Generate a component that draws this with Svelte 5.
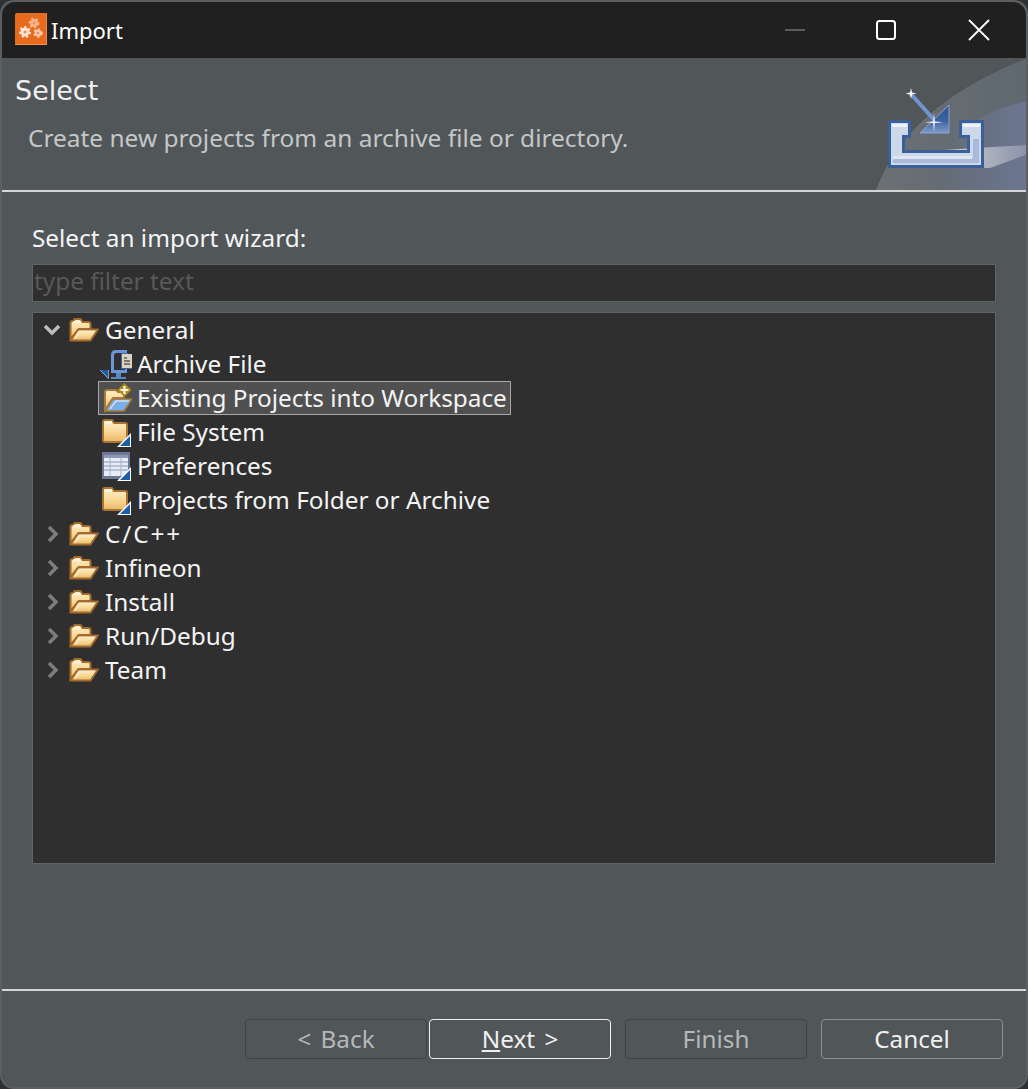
<script>
  const general = [
    { label: 'Archive File', icon: 'archive' },
    { label: 'Existing Projects into Workspace', icon: 'existing', selected: true },
    { label: 'File System', icon: 'folder' },
    { label: 'Preferences', icon: 'prefs' },
    { label: 'Projects from Folder or Archive', icon: 'folder' }
  ];
  const groups = ['C/C++', 'Infineon', 'Install', 'Run/Debug', 'Team'];
</script>

{#snippet openFolder()}
  <svg class="ic" width="30" height="24" viewBox="0 0 30 24">
    <path d="M1.500 21V5q0-2 2-2h1l1-2h6l2 3h6q2 0 2 2v5H10L1.500 21z" fill="url(#fold)" stroke="#a36a2c" stroke-width="2"/>
    <path d="M4 3h8v2.500H4z" fill="#fff3d6"/>
    <path d="M1.500 22.500l7.500-11h20l-7.500 11H1.500z" fill="url(#fold)" stroke="#a36a2c" stroke-width="2" stroke-linejoin="round"/>
    <path d="M6 20.500l5-7h14" fill="none" stroke="#fbeac6" stroke-width="1.500"/>
  </svg>
{/snippet}

{#snippet wedge()}
  <path d="M17 31L31 17V31z" fill="#fff"/>
  <path d="M20 30L30 20V30z" fill="#1c5ea8"/>
{/snippet}

{#snippet childIcon(kind)}
  {#if kind === 'archive'}
    <svg class="ic" width="32" height="32" viewBox="0 0 32 32">
      <path d="M0 22h8.500v9z" fill="#fff"/>
      <path d="M0.500 22h7.500v8z" fill="#1c5ea8"/>
      <path d="M11 25V7q0-5 5-5h11v23z" fill="#6c95d6"/>
      <path d="M14 22V8q0-3 3-3h8v17z" fill="#2f2f2f"/>
      <path d="M16 25h5v4h5v2H11v-2h5z" fill="#5b86c6"/>
      <path d="M21 5h7l5 5v11H21z" fill="#3d64a8"/>
      <rect x="22" y="6" width="10" height="14" fill="#d9d4c4"/>
      <path d="M24 10h3M24 13h6M24 16h6" stroke="#5c5c50" stroke-width="1.500"/>
    </svg>
  {:else if kind === 'existing'}
    <svg class="ic" width="32" height="32" viewBox="0 0 32 32">
      <path d="M5 28V10q0-2 2-2h9l2 2h6v6H13L5 28z" fill="url(#fold)" stroke="#a87838" stroke-width="2"/>
      <path d="M5 29l8-12h19l-8 12H5z" fill="#79aee8" stroke="#a87838" stroke-width="1.500" stroke-linejoin="round"/>
      <path d="M10 27l6-8h13" fill="none" stroke="#cfe2f8" stroke-width="1.500"/>
      <path d="M24.500 1l7 7-7 7-7-7z" fill="#a88a1e"/>
      <path d="M24.500 4v8M20.500 8h8" stroke="#fff5d8" stroke-width="2.200"/>
    </svg>
  {:else if kind === 'folder'}
    <svg class="ic" width="32" height="32" viewBox="0 0 32 32">
      <path d="M3 6q0-2 2-2h7l2 3h11q2 0 2 2v15q0 2-2 2H5q-2 0-2-2z" fill="url(#fold)" stroke="#a87434" stroke-width="2"/>
      <path d="M5 5h7v2.500H5z" fill="#fff6e0"/>
      {@render wedge()}
    </svg>
  {:else}
    <svg class="ic" width="32" height="32" viewBox="0 0 32 32">
      <rect x="2" y="2" width="28" height="27" fill="#6d7896"/>
      <rect x="4" y="5" width="24" height="21" fill="#e8ecf4"/>
      <path d="M4 5h24v3H4z" fill="#8d99b8"/>
      <path d="M4 12h24M4 16h24M4 20h24" stroke="#a8b2cc" stroke-width="1.500"/>
      <path d="M10 8v18M21 8v18" stroke="#a8b2cc" stroke-width="1"/>
      {@render wedge()}
    </svg>
  {/if}
{/snippet}

<div class="window">
  <svg class="defs" width="0" height="0" aria-hidden="true">
    <defs>
      <linearGradient id="fold" x1="0" x2="0" y1="0" y2="1">
        <stop offset="0" stop-color="#fdeec8"/>
        <stop offset="0.550" stop-color="#f8d896"/>
        <stop offset="1" stop-color="#e9b868"/>
      </linearGradient>
    </defs>
  </svg>
  <header class="titlebar">
    <div class="appicon">
      <svg width="32" height="32" viewBox="0 0 32 32">
        <rect width="32" height="32" rx="2" fill="#e86a1c"/>
        <rect x="0" y="31" width="32" height="1" fill="#f0944e"/>
        <rect x="31" y="0" width="1" height="32" fill="#ee8a44"/>
        <circle cx="19" cy="10" r="4" fill="#f6b48a" stroke="#f6b48a" stroke-width="3" stroke-dasharray="2 2"/>
        <circle cx="10" cy="19" r="4.500" fill="#fde4d4" stroke="#fde4d4" stroke-width="3" stroke-dasharray="2 2"/>
        <circle cx="23" cy="20" r="3.500" fill="#f8c8aa" stroke="#f8c8aa" stroke-width="2.500" stroke-dasharray="2 2"/>
        <circle cx="10" cy="19" r="1.500" fill="#ee8a50"/>
        <circle cx="23" cy="20" r="1.200" fill="#ee8a50"/>
        <circle cx="19" cy="10" r="1.200" fill="#ee8a50"/>
      </svg>
    </div>
    <span class="title">Import</span>
    <div class="controls">
      <svg class="ctl" width="22" height="22" viewBox="0 0 22 22"><path d="M1 11h20" stroke="#5b5b5b" stroke-width="2"/></svg>
      <svg class="ctl" width="22" height="22" viewBox="0 0 22 22"><rect x="2" y="2" width="18" height="18" rx="2.500" fill="none" stroke="#fff" stroke-width="2"/></svg>
      <svg class="ctl" width="22" height="22" viewBox="0 0 22 22"><path d="M1 1l20 20M21 1L1 21" stroke="#fff" stroke-width="1.800"/></svg>
    </div>
  </header>

  <section class="banner">
    <svg class="swoosh" width="152" height="132" viewBox="0 0 152 132">
      <defs>
        <linearGradient id="sw1" x1="0" x2="1" y1="0" y2="0">
          <stop offset="0" stop-color="#6b7073"/>
          <stop offset="1" stop-color="#5f6870"/>
        </linearGradient>
        <linearGradient id="sw2" x1="0" x2="1" y1="0" y2="0">
          <stop offset="0" stop-color="#636b73"/>
          <stop offset="1" stop-color="#6c7691"/>
        </linearGradient>
        <linearGradient id="sw3" x1="0" x2="1" y1="0" y2="0">
          <stop offset="0" stop-color="#7f8487"/>
          <stop offset="0.450" stop-color="#c4c6ca"/>
          <stop offset="1" stop-color="#8a92a8"/>
        </linearGradient>
      </defs>
      <path d="M0 132Q32 46 152 0V132z" fill="url(#sw1)"/>
      <path d="M60 132Q66 60 152 43V132z" fill="url(#sw2)"/>
      <path d="M27 110L67 92 152 87V96L114 110z" fill="url(#sw3)"/>
    </svg>
    <svg class="wizard" width="110" height="90" viewBox="880 85 110 90">
      <defs>
        <linearGradient id="tri" x1="0" x2="0" y1="0" y2="1">
          <stop offset="0" stop-color="#2f5595"/>
          <stop offset="0.550" stop-color="#3c619f"/>
          <stop offset="1" stop-color="#7f9cc9"/>
        </linearGradient>
      </defs>
      <path d="M910 93L936 122" stroke="#6f94d0" stroke-width="4"/>
      <path d="M949 105V133H920z" fill="url(#tri)" stroke="#8aa3cb" stroke-width="1"/>
      <path d="M911 88l1 4.500 4.500 1-4.500 1-1 4.500-1-4.500-4.500-1 4.500-1z" fill="#fff"/>
      <path d="M934 113l.8 8.500 8.500.8-8.500.8-.8 8.500-.8-8.500-8.500-.8 8.500-.8z" fill="#fff"/>
      <path d="M889.500 121.500H909.500V136.500H903.500V151.500H968.500V136.500H960.500V121.500H982.500V166.500H889.500z" fill="#cdd8ea" stroke="#3b5f98" stroke-width="3"/>
      <path d="M973 139H979V163H893V158H973z" fill="#a9b9d9"/>
      <path d="M893 156H972V159H893z" fill="#dfe5f1"/>
      <path d="M892 124H907V127H892zM963 124H980V127H963z" fill="#eef2f8"/>
    </svg>
    <h1>Select</h1>
    <p>Create new projects from an archive file or directory.</p>
  </section>

  <main class="content">
    <div class="label">Select an import wizard:</div>
    <div class="filter">type filter text</div>
    <div class="tree">
      <div class="row top">
        <svg class="tw" width="20" height="20" viewBox="0 0 20 20"><path d="M3 6l7 7 7-7" fill="none" stroke="#bdbdbd" stroke-width="3.500"/></svg>
        {@render openFolder()}
        <span>General</span>
      </div>
      {#each general as item}
        <div class="row child">
          <div class="item" class:selected={item.selected}>
            <div class="iconbox">{@render childIcon(item.icon)}</div>
            <span>{item.label}</span>
          </div>
        </div>
      {/each}
      {#each groups as g}
        <div class="row top">
          <svg class="tw" width="20" height="20" viewBox="0 0 20 20"><path d="M7 3l7 7-7 7" fill="none" stroke="#7d7d7d" stroke-width="3.500"/></svg>
          {@render openFolder()}
          <span class:wide={g === 'C/C++'}>{g}</span>
        </div>
      {/each}
    </div>
  </main>

  <footer class="footer">
    <div class="buttons">
      <button class="disabled">&lt; Back</button>
      <button class="primary"><u>N</u>ext &gt;</button>
      <button class="disabled gap">Finish</button>
      <button class="gap normal">Cancel</button>
    </div>
  </footer>
</div>

<style>
  :global(body) {
    margin: 0;
    background: #2e3133;
  }
  .window {
    position: relative;
    width: 1028px;
    height: 1089px;
    box-sizing: border-box;
    padding: 2px;
    background: #5b5f61;
    border-radius: 14px;
    display: flex;
    flex-direction: column;
    font-family: "Noto Sans", "Open Sans", sans-serif;
    color: #f2f2f2;
    font-size: 24.33px;
    overflow: hidden;
  }
  .defs { position: absolute; }
  .titlebar {
    height: 56px;
    flex: none;
    background: #202020;
    border-radius: 13px 13px 0 0;
    display: flex;
    align-items: center;
    padding-left: 13px;
    box-sizing: border-box;
  }
  .appicon { width: 32px; height: 32px; display: flex; margin-bottom: 2px; }
  .title { margin-left: 4px; font-size: 22px; color: #fff; }
  .controls { margin-left: auto; display: flex; align-items: center; }
  .ctl { margin-right: 69px; }
  .ctl:nth-child(2) { margin-right: 71px; }
  .ctl:last-child { margin-right: 36px; }
  .banner {
    position: relative;
    height: 132px;
    flex: none;
    background: #515658;
    border-bottom: 2px solid #d4d6d6;
    box-sizing: content-box;
    overflow: hidden;
  }
  .swoosh { position: absolute; right: -2px; top: 0; }
  .wizard { position: absolute; left: 878px; top: 27px; }
  h1 {
    margin: 0;
    padding: 15px 0 0 13px;
    font: 400 27px/36px "DejaVu Sans", sans-serif;
    color: #f0f0f0;
  }
  p {
    margin: 12px 0 0 26px;
    font-size: 24.450px;
    line-height: 34px;
    color: #c4c7c8;
  }
  .content {
    flex: none;
    height: 799px;
    background: #515658;
    padding: 29px 30px 0;
    display: flex;
    flex-direction: column;
    border-bottom: 2px solid #d4d6d6;
    box-sizing: border-box;
  }
  .label { height: 43px; line-height: 34px; color: #f4f4f4; }
  .filter {
    height: 38px;
    flex: none;
    box-sizing: border-box;
    background: #2f2f2f;
    border: 1px solid #5f6466;
    color: #585858;
    line-height: 32px;
    padding-left: 1px;
  }
  .tree {
    margin-top: 10px;
    height: 552px;
    flex: none;
    box-sizing: border-box;
    background: #2f2f2f;
    border: 1px solid #5f6466;
  }
  .row {
    height: 34px;
    display: flex;
    align-items: center;
    color: #f4f4f4;
    white-space: nowrap;
  }
  .row span { line-height: 34px; }
  .row.top .tw { margin-left: 9px; }
  .row.top .ic { margin-left: 7px; }
  .row.top span { margin-left: 6px; }
  .row.top span.wide { letter-spacing: 1.900px; }
  .row.child { padding-left: 65px; }
  .item {
    display: flex;
    align-items: center;
    height: 34px;
    box-sizing: border-box;
    padding-right: 4px;
    padding-left: 2px;
  }
  .item.selected {
    background: #505050;
    box-shadow: inset 0 0 0 1px #a8a8a8;
  }
  .iconbox { width: 32px; height: 32px; display: flex; flex: none; }
  .item span { margin-left: 5px; }
  .footer {
    flex: 1;
    background: #515658;
    display: flex;
    padding-top: 28px;
    box-sizing: border-box;
    border-radius: 0 0 12px 12px;
  }
  .buttons { display: flex; margin-left: 243px; }
  button {
    width: 182px;
    height: 40px;
    box-sizing: border-box;
    background: transparent;
    border-radius: 4px;
    border: 1px solid #3e4244;
    font: 24.330px/1 "Noto Sans", "Open Sans", sans-serif;
    word-spacing: 3px;
    color: #f0f0f0;
    padding: 0;
    margin-left: 2px;
  }
  button:first-child { margin-left: 0; }
  .gap { margin-left: 14px; }
  .primary { border: 1px solid #f0f0f0; }
  .normal { border-color: #8a8d8f; }
  .disabled { color: #b4b8ba; }
</style>
